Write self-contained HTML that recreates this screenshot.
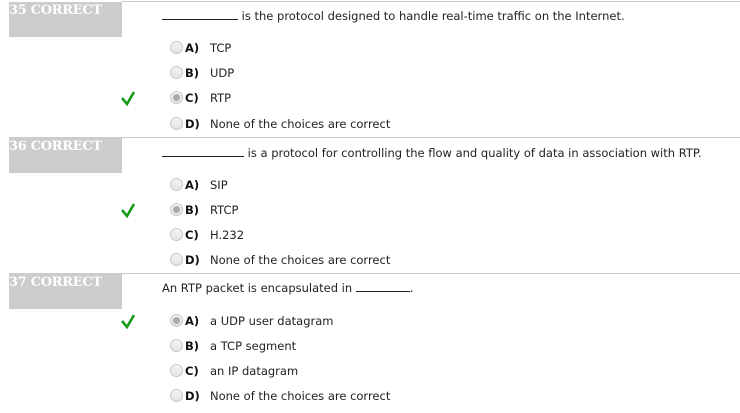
<!DOCTYPE html>
<html><head><meta charset="utf-8"><style>
body{margin:0;width:740px;height:413px;background:#fff;position:relative;overflow:hidden;font-family:"DejaVu Sans","Liberation Sans",sans-serif;font-size:11.5px;color:#222}
.line{position:absolute;left:9px;right:0;height:1px;background:#ccc}
.blk{position:absolute;left:9px;width:113px;height:35px;background:#ccc;color:#fff;font:bold 13px "DejaVu Serif",serif;padding:1px 0 0 0;box-sizing:border-box;letter-spacing:-0.3px}
.q{position:absolute;left:162px;white-space:nowrap;line-height:14px}
.u{display:inline-block;border-bottom:1px solid #222;height:11px;vertical-align:baseline}
.opt{position:absolute;left:170px;white-space:nowrap;line-height:14px}
.r{display:inline-block;width:11px;height:11px;border:1px solid #c8c8c8;border-radius:50%;background:linear-gradient(#f4f4f4,#e4e4e4);vertical-align:-2px;position:relative}
.r.s::after{content:"";position:absolute;left:2px;top:2px;width:7px;height:7px;border-radius:50%;background:#aaa}
.l{font-weight:bold;color:#111;display:inline-block;width:25px;margin-left:2px}
.chk{position:absolute;left:121px}
</style></head><body>
<div class="line" style="top:1px;left:122px"></div>
<div class="blk" style="top:2px">35 CORRECT</div>
<div class="q" style="top:8px"><span class="u" style="width:76px"></span> is the protocol designed to handle real-time traffic on the Internet.</div>
<div class="opt" style="top:41px"><span class="r"></span><span class="l">A)</span>TCP</div>
<div class="opt" style="top:66px"><span class="r"></span><span class="l">B)</span>UDP</div>
<div class="opt" style="top:91px"><span class="r s"></span><span class="l">C)</span>RTP</div>
<div class="opt" style="top:117px"><span class="r"></span><span class="l">D)</span>None of the choices are correct</div>
<svg class="chk" style="top:91px" width="14" height="15" viewBox="0 0 14 15"><path d="M1 7 L6 13 L13 1" fill="none" stroke="#1a9a1a" stroke-width="2.6"/></svg>

<div class="line" style="top:137px"></div>
<div class="blk" style="top:138px">36 CORRECT</div>
<div class="q" style="top:145px"><span class="u" style="width:82px"></span> is a protocol for controlling the flow and quality of data in association with RTP.</div>
<div class="opt" style="top:178px"><span class="r"></span><span class="l">A)</span>SIP</div>
<div class="opt" style="top:203px"><span class="r s"></span><span class="l">B)</span>RTCP</div>
<div class="opt" style="top:228px"><span class="r"></span><span class="l">C)</span>H.232</div>
<div class="opt" style="top:253px"><span class="r"></span><span class="l">D)</span>None of the choices are correct</div>
<svg class="chk" style="top:203px" width="14" height="15" viewBox="0 0 14 15"><path d="M1 7 L6 13 L13 1" fill="none" stroke="#1a9a1a" stroke-width="2.6"/></svg>

<div class="line" style="top:273px"></div>
<div class="blk" style="top:274px">37 CORRECT</div>
<div class="q" style="top:280px">An RTP packet is encapsulated in <span class="u" style="width:54px"></span>.</div>
<div class="opt" style="top:314px"><span class="r s"></span><span class="l">A)</span>a UDP user datagram</div>
<div class="opt" style="top:339px"><span class="r"></span><span class="l">B)</span>a TCP segment</div>
<div class="opt" style="top:364px"><span class="r"></span><span class="l">C)</span>an IP datagram</div>
<div class="opt" style="top:389px"><span class="r"></span><span class="l">D)</span>None of the choices are correct</div>
<svg class="chk" style="top:314px" width="14" height="15" viewBox="0 0 14 15"><path d="M1 7 L6 13 L13 1" fill="none" stroke="#1a9a1a" stroke-width="2.6"/></svg>
</body></html>
